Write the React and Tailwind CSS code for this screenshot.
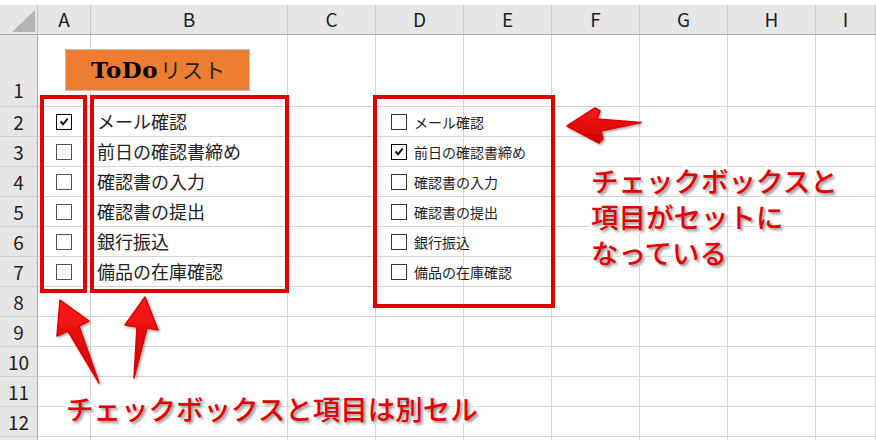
const cols = [
  { k: "A", w: 53 },
  { k: "B", w: 197 },
  { k: "C", w: 88 },
  { k: "D", w: 88 },
  { k: "E", w: 88 },
  { k: "F", w: 88 },
  { k: "G", w: 88 },
  { k: "H", w: 88 },
  { k: "I", w: 60 },
];

const todos = ["メール確認", "前日の確認書締め", "確認書の入力", "確認書の提出", "銀行振込", "備品の在庫確認"];

function Tick() {
  return (
    <svg viewBox="0 0 15 15" className="w-full h-full">
      <path d="M3 7.4 L4.7 6.1 L6.4 8.3 L10.7 3.3 L12.2 4.6 L6.5 11.4 Z" fill="#111" />
    </svg>
  );
}

function Box({ checked, size = "w-[16px] h-[16px]", tone = "border-[#4a4a4a]" }) {
  return (
    <div className={`${size} border bg-white ${checked ? "border-black" : tone}`}>
      {checked && <Tick />}
    </div>
  );
}

function Row({ n, h, children }) {
  return (
    <div className="flex" style={{ height: h }}>
      <div
        className={`w-[38px] shrink-0 bg-[#e6e6e6] border-r border-b border-r-[#a6a6a6] border-b-[#cfcfcf] flex justify-center text-[19px] text-[#1e1e1e] leading-none ${
          n === 1 ? "items-end pb-[7px]" : "items-center"
        }`}
      >
        {n < 13 ? n : ""}
      </div>
      {cols.map((c, i) => (
        <div
          key={c.k}
          className="shrink-0 border-r border-b border-[#d4d4d4] flex items-center"
          style={{ width: c.w }}
        >
          {children && children[i]}
        </div>
      ))}
    </div>
  );
}

const annot =
  "text-[#e00000] font-medium text-[27.5px] leading-[36px] [-webkit-text-stroke:6px_white] [paint-order:stroke_fill] [text-shadow:2px_2px_3px_rgba(0,0,0,0.45)]";

export default function App() {
  return (
    <div className="relative w-[876px] h-[440px] overflow-hidden bg-white [font-family:'Noto_Sans_CJK_JP',sans-serif]">
      <div className="h-[5px]" />
      <div className="flex h-[30px] bg-[#e6e6e6] border-b border-[#a6a6a6]">
        <div className="w-[38px] shrink-0 border-r border-[#c6c6c6] relative">
          <svg className="absolute left-[12px] top-[5px]" width="23" height="22" viewBox="0 0 23 22">
            <polygon points="23,0 23,22 0,22" fill="#b4b4b4" />
          </svg>
        </div>
        {cols.map((c) => (
          <div
            key={c.k}
            className="shrink-0 border-r border-[#c6c6c6] flex items-center justify-center text-[19px] text-[#1e1e1e]"
            style={{ width: c.w }}
          >
            {c.k}
          </div>
        ))}
      </div>

      <Row n={1} h={72} />
      {todos.map((t, i) => (
        <Row key={t} n={i + 2} h={30}>
          {[
            <div key="a" className="w-full flex justify-center">
              <Box checked={i === 0} size="w-[16px] h-[16px]" tone="border-[#555]" />
            </div>,
            <span key="b" className="pl-[6px] text-[18px] text-[#222] whitespace-nowrap">
              {t}
            </span>,
          ]}
        </Row>
      ))}
      {[8, 9, 10, 11, 12, 13].map((n) => (
        <Row key={n} n={n} h={30} />
      ))}

      {/* title shape */}
      <div className="absolute left-[65px] top-[49px] w-[185px] h-[42px] bg-[#ed7d31] border border-[#bfbfbf] flex items-center pl-[25px]">
        <span className="[font-family:'DejaVu_Serif',serif] font-bold text-[23px] text-black tracking-[0.5px]">ToDo</span>
        <span className="ml-[2px] text-[21px] text-[#222] tracking-[1px]">リスト</span>
      </div>

      {/* red frames */}
      <div className="absolute left-[40px] top-[95px] w-[47px] h-[198px] border-4 border-[#e00000]" />
      <div className="absolute left-[90px] top-[95px] w-[199px] h-[198px] border-4 border-[#e00000]" />

      {/* form checkbox group */}
      <div className="absolute left-[373px] top-[95px] w-[182px] h-[213px] border-4 border-[#e00000] pt-[8px] pl-[14px]">
        {todos.map((t, i) => (
          <div key={t} className="h-[30px] flex items-center gap-[7px]">
            <Box checked={i === 1} size="w-[16px] h-[16px]" tone="border-[#333]" />
            <span className="text-[14px] text-[#222] whitespace-nowrap">{t}</span>
          </div>
        ))}
      </div>

      {/* arrows */}
      <svg className="absolute left-0 top-0 pointer-events-none" width="876" height="440">
        <defs>
          <linearGradient id="rg" x1="0" y1="0" x2="0" y2="1">
            <stop offset="0" stopColor="#ff1a1a" />
            <stop offset="1" stopColor="#c80000" />
          </linearGradient>
          <filter id="sh" x="-20%" y="-20%" width="140%" height="140%">
            <feDropShadow dx="1.5" dy="1.5" stdDeviation="1.2" floodColor="#000" floodOpacity="0.35" />
          </filter>
        </defs>
        <g fill="url(#rg)" stroke="#dd0000" strokeWidth="1.5" strokeLinejoin="round" filter="url(#sh)">
          <polygon points="567,126 595,108 600,111 597,119 641,122.5 601,131 603,139 599,143" />
          <polygon points="60,300 89,321 79,326 99,383 68,331 57,336" />
          <polygon points="145,297 158,330 147,328 134,378 137,327 125,325" />
        </g>
      </svg>

      {/* annotations */}
      <div className={`absolute left-[591px] top-[162px] ${annot}`}>
        <div>チェックボックスと</div>
        <div>項目がセットに</div>
        <div>なっている</div>
      </div>
      <div className={`absolute left-[66px] top-[390px] whitespace-nowrap ${annot}`}>
        チェックボックスと項目は別セル
      </div>
    </div>
  );
}
